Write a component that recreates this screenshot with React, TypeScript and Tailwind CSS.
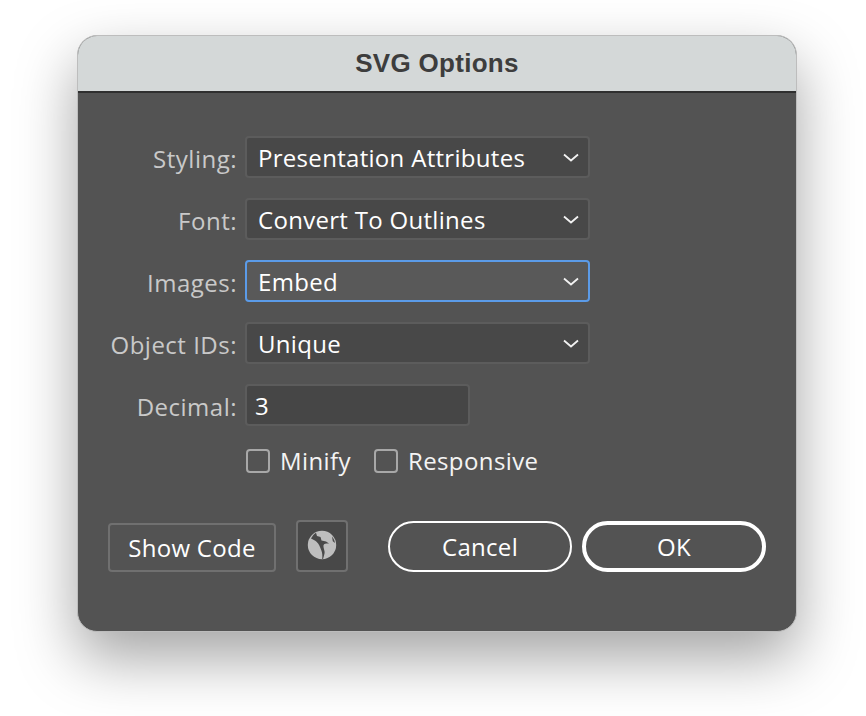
import React from "react";

const Chevron = () => (
  <svg width="16" height="9" viewBox="0 0 16 9" fill="none" className="shrink-0">
    <path d="M1 1.5 L8 7.5 L15 1.5" stroke="#f2f2f2" strokeWidth="1.8" />
  </svg>
);

// globe glyph: light disc with the oceans cut out in the button colour
const Globe = () => (
  <svg width="30" height="30" viewBox="0 0 30 30" className="mb-[2px] shrink-0">
    <circle cx="15" cy="15" r="14.2" fill="#bebebe" />
    <path
      d="M4 8.5 C5.5 6 7 4 9 2.8 L10 6 L13.5 7 L14.5 10.5 L19 11.5 L22 13.5 L19.5 13.5 C17.5 13.5 16 14.5 16.5 17 C17 20 18 21.5 17.5 23.5 C17 25.5 16.5 27.5 16 29 L15.2 29 C15.5 26 15.5 23 14.2 20 C13 17 12 14 9.5 11.8 C8 10.5 6 9.2 4 8.5 Z"
      fill="#484848"
    />
    <path d="M25 6.5 C26.5 8.5 27.6 10.5 28 13 L25.8 11.2 Z" fill="#484848" />
  </svg>
);

const Select = ({ value, focused }: { value: string; focused?: boolean }) => (
  <div
    className={
      focused
        ? "flex h-[42px] w-[345px] items-center justify-between rounded-[4px] border-2 border-[#5b9be8] bg-[#595959] pl-[11px] pr-[9px] text-white"
        : "flex h-[42px] w-[345px] items-center justify-between rounded-[4px] border-2 border-[#5c5c5c] bg-[#484848] pl-[11px] pr-[9px] text-white"
    }
  >
    <span className="pt-px">{value}</span>
    <Chevron />
  </div>
);

const Row = ({ label, children }: { label: string; children: React.ReactNode }) => (
  <div className="flex items-center gap-[8px]">
    <span className="w-[159px] pt-[4px] text-right tracking-[0.5px] text-[#c9c9c9]">{label}</span>
    {children}
  </div>
);

const Check = ({ label }: { label: string }) => (
  <div className="flex items-center gap-[10px]">
    <div className="h-[24px] w-[24px] rounded-[4px] border-2 border-[#a8a8a8]" />
    <span className="tracking-[0.4px] text-[#f4f4f4]">{label}</span>
  </div>
);

export default function App() {
  return (
    <div
      className="flex h-[716px] w-[866px] items-start justify-start bg-white pl-[77px] pt-[35px] text-[24px] leading-[30px] tracking-[0.3px]"
      style={{ fontFamily: '"Open Sans", sans-serif' }}
    >
      <div className="h-[597px] w-[720px] overflow-hidden rounded-[20px] border border-[#bdbdbd] bg-[#535353] shadow-[0_26px_60px_rgba(0,0,0,0.36)]">
        <div
          className="flex h-[57px] items-center justify-center border-b-2 border-[#2f2f2f] bg-[#d4d8d8] pb-px text-[26px] font-bold tracking-[0.3px] text-[#3d3d3d]"
          style={{ fontFamily: '"Liberation Sans", Arial, sans-serif' }}
        >
          SVG Options
        </div>
        <div className="flex flex-col gap-[20px] pt-[43px]">
          <Row label="Styling:">
            <Select value="Presentation Attributes" />
          </Row>
          <Row label="Font:">
            <Select value="Convert To Outlines" />
          </Row>
          <Row label="Images:">
            <Select value="Embed" focused />
          </Row>
          <Row label="Object IDs:">
            <Select value="Unique" />
          </Row>
          <Row label="Decimal:">
            <div className="flex h-[42px] w-[225px] items-center rounded-[4px] border-2 border-[#5c5c5c] bg-[#464646] pl-[8px] pt-px text-white">
              3
            </div>
          </Row>
        </div>
        <div className="mt-[20px] flex gap-[23px] pl-[168px]">
          <Check label="Minify" />
          <Check label="Responsive" />
        </div>
        <div className="mt-[44px] flex items-end pl-[30px]">
          <div className="flex h-[49px] w-[168px] items-center justify-center rounded-[4px] border-2 border-[#707070] text-white">
            Show Code
          </div>
          <div className="ml-[20px] flex h-[52px] w-[52px] items-center justify-center rounded-[4px] border-2 border-[#707070] bg-[#484848]">
            <Globe />
          </div>
          <div className="ml-[40px] flex h-[51px] w-[184px] items-center justify-center rounded-full border-2 border-white text-white">
            Cancel
          </div>
          <div className="ml-[10px] flex h-[51px] w-[184px] items-center justify-center rounded-full border-4 border-white text-white">
            OK
          </div>
        </div>
      </div>
    </div>
  );
}
